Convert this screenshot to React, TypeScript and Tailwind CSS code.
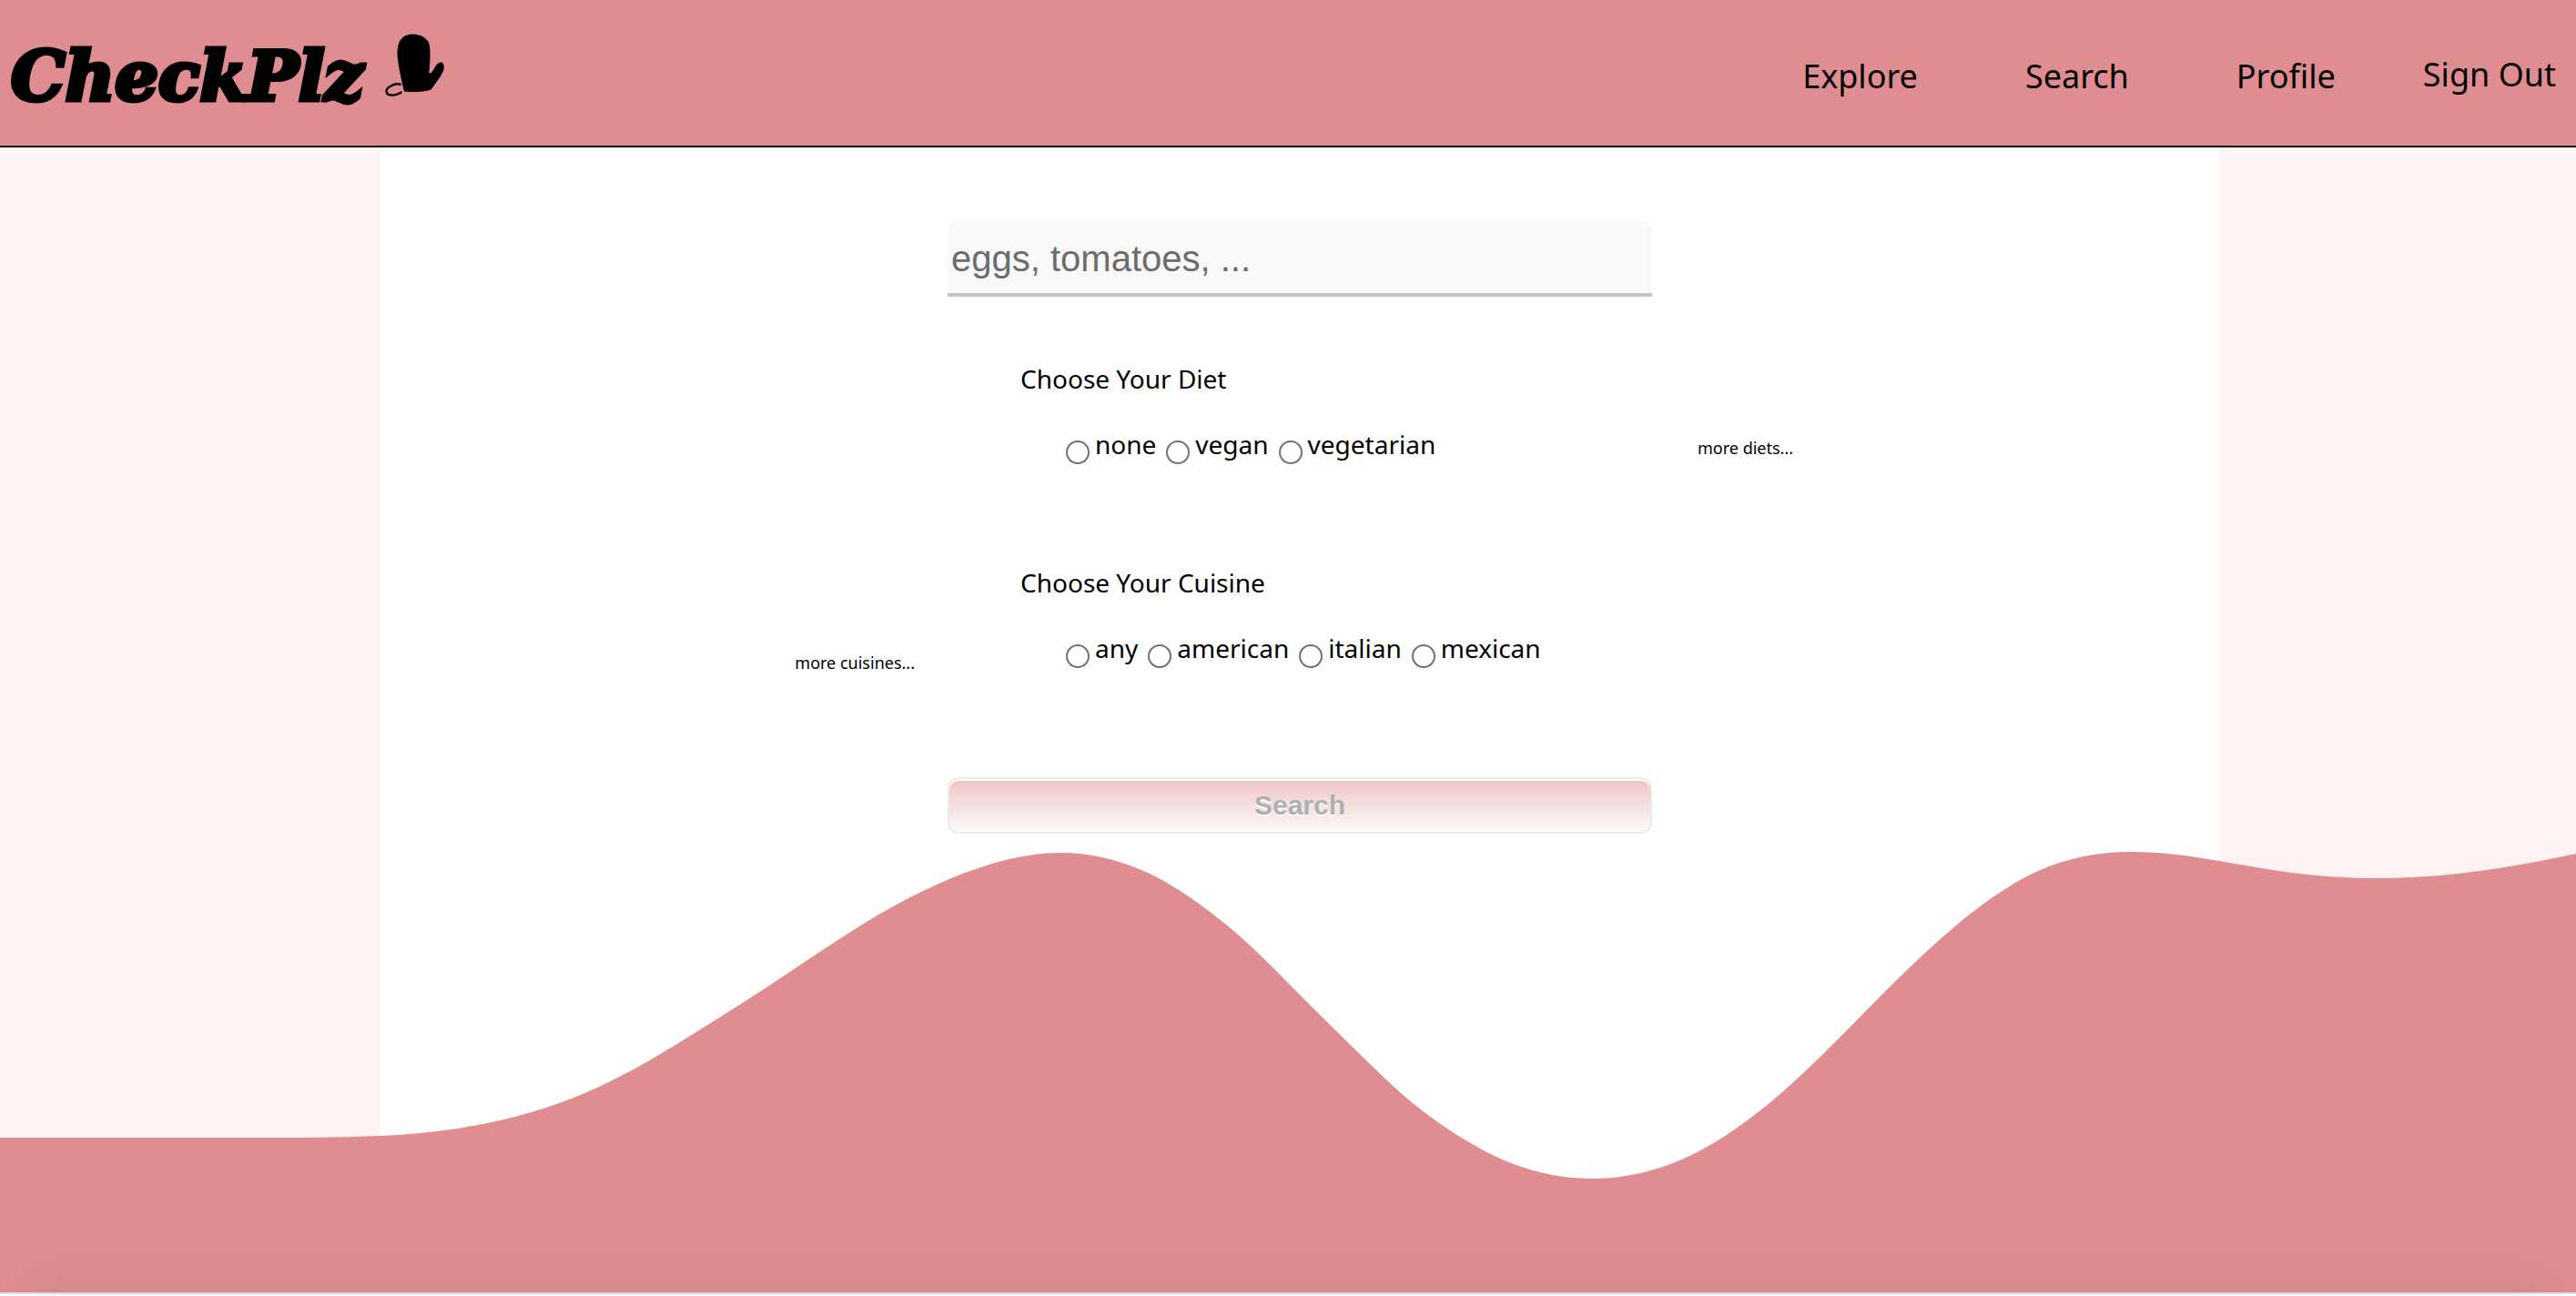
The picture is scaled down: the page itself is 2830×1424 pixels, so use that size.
import React, { useState } from "react";

type Knot = [x: number, y: number, slope: number];

const WAVE: Knot[] = [
  [0, 1250, 0],
  [300, 1250, 0],
  [418, 1248, -0.045],
  [495, 1241, -0.14],
  [628, 1207, -0.39],
  [739, 1150, -0.61],
  [860, 1073, -0.665],
  [947, 1016, -0.62],
  [1045, 965, -0.41],
  [1166, 937, 0],
  [1254, 956, 0.43],
  [1352, 1020, 0.83],
  [1453, 1118, 0.97],
  [1529, 1192, 0.93],
  [1628, 1263, 0.54],
  [1748, 1295, 0],
  [1870, 1263, -0.54],
  [1967, 1192, -0.9],
  [2100, 1061, -0.96],
  [2219, 967, -0.57],
  [2343, 936, 0],
  [2518, 959, 0.13],
  [2608, 965, 0],
  [2700, 960, -0.11],
  [2830, 938, -0.22],
];

// Joins the knots with cubic curves that share a slope at each knot.
function wavePath(knots: Knot[]) {
  let d = `M${knots[0][0]} ${knots[0][1]}`;
  for (let i = 1; i < knots.length; i++) {
    const [x0, y0, m0] = knots[i - 1];
    const [x1, y1, m1] = knots[i];
    const h = (x1 - x0) / 3;
    d += `C${x0 + h} ${y0 + m0 * h} ${x1 - h} ${y1 - m1 * h} ${x1} ${y1}`;
  }
  return `${d}V1420H0Z`;
}

function Wave() {
  return (
    <svg
      viewBox="0 930 2830 490"
      className="pointer-events-none absolute inset-x-0 bottom-0 block w-full"
      fill="#df8d90"
      aria-hidden="true"
    >
      <path d={wavePath(WAVE)} />
    </svg>
  );
}

function Mitten() {
  return (
    <svg viewBox="0 0 66 70" className="h-[70px] w-[66px]" aria-hidden="true">
      <path d="M21 63.500C17 47 14 32 13.500 23C13 9 18 1 30 .500C38 .300 44 4 47.500 8.500C50 14 50 24 49 36L48.300 43.500C51 44 52.500 41 55 36.500C57.500 32 60 31 62 31.600C65 32.500 65.500 37 64 41C61 48 56 54 50.500 61.500C42 64.500 30 64.500 21 63.500Z" />
      <path
        d="M17.500 56.200C13 53.500 2.500 58 1.500 62.500C1 68.500 10 69.500 18.500 64"
        fill="none"
        stroke="#000"
        strokeWidth="2.400"
      />
    </svg>
  );
}

function Header() {
  return (
    <header className="flex h-[162px] items-center justify-between border-b-2 border-black bg-[#df8d90] pr-[22px] pl-3">
      <a href="#home" className="flex items-center gap-6">
        <span className="pt-2 font-['DejaVu_Serif',serif] text-[75px] leading-none font-bold italic [-webkit-text-stroke:5px_black]">
          CheckPlz
        </span>
        <span className="pb-4">
          <Mitten />
        </span>
      </a>
      <nav className="flex items-center gap-24 pt-1 text-[36px] leading-[48px]">
        <div className="flex gap-[118px] pt-1">
          <a href="#explore">Explore</a>
          <a href="#search">Search</a>
          <a href="#profile">Profile</a>
        </div>
        <button type="button">Sign Out</button>
      </nav>
    </header>
  );
}

function Choices({
  name,
  legend,
  options,
}: {
  name: string;
  legend: string;
  options: string[];
}) {
  return (
    <fieldset className="pl-20 text-[28px] leading-10">
      <legend className="mb-8">{legend}</legend>
      <div className="flex gap-[11px] pl-[50px]">
        {options.map((option) => (
          <label key={option} className="flex items-start gap-[6px]">
            <input
              type="radio"
              name={name}
              value={option}
              className="mt-4 size-[26px] appearance-none rounded-full border-2 border-[#707070] bg-white checked:border-8"
            />
            {option}
          </label>
        ))}
      </div>
    </fieldset>
  );
}

export default function App() {
  const [ingredients, setIngredients] = useState("");

  return (
    <div className="relative flex min-h-screen flex-col overflow-hidden bg-[#fff2f2] font-['Noto_Sans',sans-serif] text-black">
      <Header />
      <main className="relative grid flex-1 grid-cols-[418fr_2020fr_392fr]">
        <form
          className="col-start-2 grid grid-cols-[1fr_774px_1fr] content-start bg-white pt-20 pb-[504px]"
          onSubmit={(event) => event.preventDefault()}
        >
          <input
            type="text"
            aria-label="Ingredients"
            placeholder="eggs, tomatoes, ..."
            value={ingredients}
            onChange={(event) => setIngredients(event.target.value)}
            className="col-start-2 h-[84px] w-full rounded-t-[10px] border-b-4 border-[#c4c4c4] bg-[#f9f9f9] px-1 pt-1 font-['Liberation_Sans',sans-serif] text-[40px] outline-none placeholder:text-[#6c6c6c]"
          />

          <div className="col-start-2 row-start-2 mt-[70px]">
            <Choices
              name="diet"
              legend="Choose Your Diet"
              options={["none", "vegan", "vegetarian"]}
            />
          </div>
          <button
            type="button"
            className="col-start-3 row-start-2 mb-[6px] ml-[50px] self-end justify-self-start text-[18px] leading-6"
          >
            more diets...
          </button>

          <div className="col-start-2 row-start-3 mt-[110px]">
            <Choices
              name="cuisine"
              legend="Choose Your Cuisine"
              options={["any", "american", "italian", "mexican"]}
            />
          </div>
          <button
            type="button"
            className="col-start-1 row-start-3 mr-9 -mb-[6px] self-end justify-self-end text-[18px] leading-6"
          >
            more cuisines...
          </button>

          <button
            type="submit"
            className="col-start-2 row-start-4 mt-[120px] h-[62px] rounded-xl border-2 border-[#ebebeb] bg-linear-to-b from-[#efc4c6] to-[#fafafa] pb-[2px] font-['Liberation_Sans',sans-serif] text-[30px] font-bold text-[#afafaf] shadow-[inset_0_2px_0_white] [text-shadow:0_2px_0_white]"
          >
            Search
          </button>
        </form>
        <Wave />
      </main>
      <footer className="h-1 border-t-2 border-[#e0e0e0] bg-white">
        <div className="absolute inset-x-10 top-full h-10 shadow-[0_0_60px_rgba(0,0,0,0.09)]" />
      </footer>
    </div>
  );
}
